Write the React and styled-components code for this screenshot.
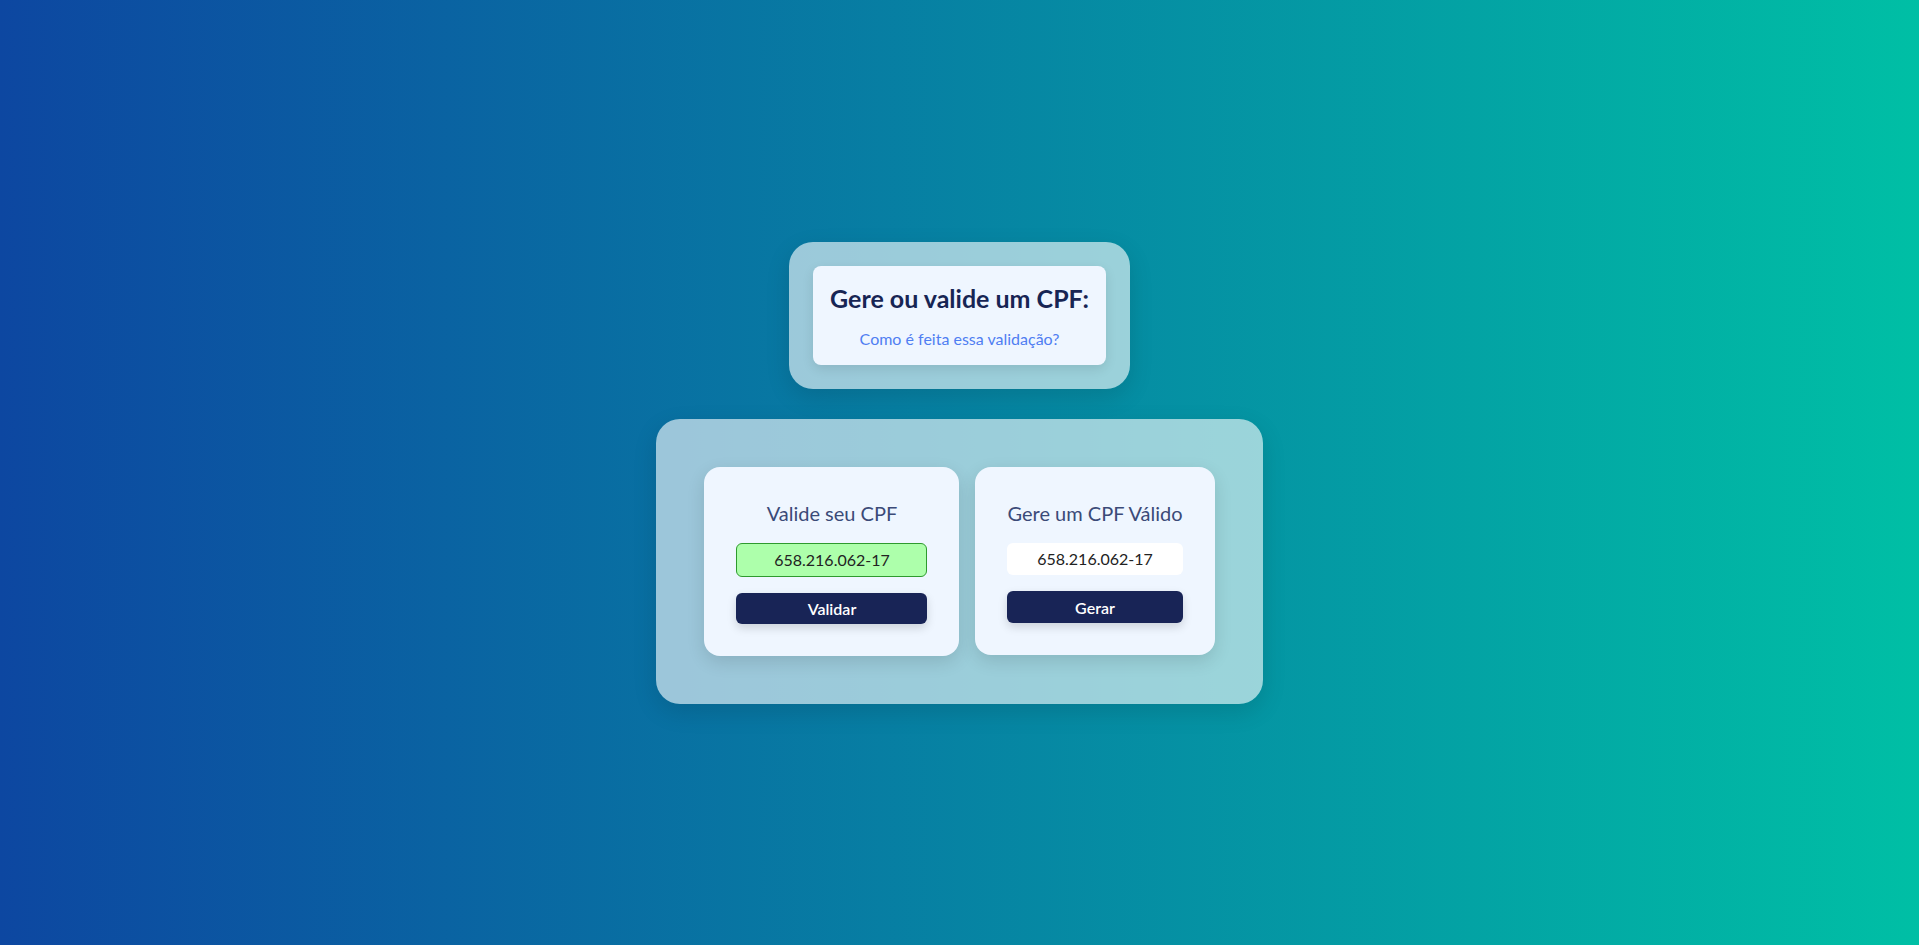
import React, { useState } from "react";
import styled, { createGlobalStyle } from "styled-components";

// === 스타일 ===
const GlobalStyle = createGlobalStyle`
  * {
    box-sizing: border-box;
  }

  html, body {
    margin: 0;
    padding: 0;
  }

  body {
    font-family: "Lato", "Open Sans", sans-serif;
    background: linear-gradient(90deg, #0d47a1 0%, #00bfa5 100%);
    min-height: 100vh;
  }
`;

const Page = styled.main`
  min-height: 100vh;
  display: flex;
  flex-direction: column;
  align-items: center;
  justify-content: center;
  gap: 30px;
`;

const Glass = styled.section`
  background: rgba(255, 255, 255, 0.6);
  border-radius: 24px;
  padding: ${(props) => props.$pad || "24px"};
  box-shadow: 0 8px 24px rgba(0, 0, 0, 0.12);
  display: flex;
  align-items: center;
  gap: 16px;
`;

const Header = styled.div`
  background: #eff6ff;
  border-radius: 8px;
  padding: 16px 17px;
  text-align: center;
  box-shadow: 0 4px 12px rgba(0, 0, 0, 0.1);
`;

const Title = styled.h1`
  margin: 0 0 14px;
  font-size: 25px;
  line-height: 32px;
  font-weight: 700;
  color: #172554;
`;

const HelpLink = styled.a`
  display: block;
  font-size: 16px;
  line-height: 21px;
  color: #4f7ef2;
  text-decoration: none;
  cursor: pointer;

  &:hover {
    text-decoration: underline;
  }
`;

const Card = styled.div`
  background: #eff6ff;
  border-radius: 16px;
  padding: 32px;
  display: flex;
  flex-direction: column;
  align-items: stretch;
  box-shadow: 0 6px 18px rgba(0, 0, 0, 0.12);
`;

const CardTitle = styled.h2`
  margin: 0 0 16px;
  font-size: 20px;
  line-height: 28px;
  font-weight: 400;
  text-align: center;
  color: #3b4a78;
  white-space: nowrap;
`;

const CpfInput = styled.input`
  width: 191px;
  height: 34px;
  border-radius: 6px;
  border: 1px solid ${(props) => (props.$valid ? "#2e9a2e" : "#cbd5e1")};
  background: ${(props) => (props.$valid ? "#adffab" : "#fff")};
  font-family: inherit;
  font-size: 16px;
  color: #222;
  text-align: center;
  outline: none;
`;

const CpfOutput = styled.div`
  height: 32px;
  border-radius: 6px;
  background: #fff;
  font-size: 16px;
  line-height: 32px;
  color: #222;
  text-align: center;
`;

const ActionButton = styled.button`
  margin-top: 16px;
  height: ${(props) => props.$h || 32}px;
  border: none;
  border-radius: 6px;
  background: #182456;
  color: #fff;
  font-family: inherit;
  font-size: 16px;
  font-weight: 600;
  cursor: pointer;
  box-shadow: 0 4px 10px rgba(0, 0, 0, 0.15);

  &:hover {
    background: #22306e;
  }
`;

// === 컴포넌트 ===
const App = () => {
  const [cpf, setCpf] = useState("658.216.062-17");
  const [generated] = useState("658.216.062-17");

  return (
    <>
      <GlobalStyle />
      <Page>
        <Glass>
          <Header>
            <Title>Gere ou valide um CPF:</Title>
            <HelpLink>Como é feita essa validação?</HelpLink>
          </Header>
        </Glass>

        <Glass $pad="48px">
          <Card>
            <CardTitle>Valide seu CPF</CardTitle>
            <CpfInput
              $valid
              value={cpf}
              onChange={(e) => setCpf(e.target.value)}
            />
            <ActionButton $h={31}>Validar</ActionButton>
          </Card>
          <Card>
            <CardTitle>Gere um CPF Válido</CardTitle>
            <CpfOutput>{generated}</CpfOutput>
            <ActionButton>Gerar</ActionButton>
          </Card>
        </Glass>
      </Page>
    </>
  );
};

export default App;
